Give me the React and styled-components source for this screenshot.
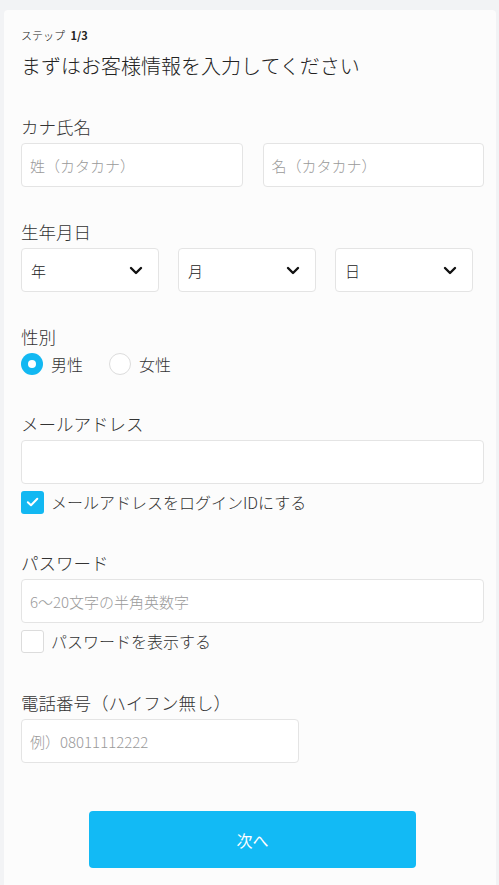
import React, { useState } from 'react';
import styled, { createGlobalStyle } from 'styled-components';

const GlobalStyle = createGlobalStyle`
  html, body {
    margin: 0;
    padding: 0;
    background: #f2f3f5;
  }
  body {
    font-family: "Noto Sans CJK JP", "Noto Sans", "Liberation Sans", sans-serif;
    font-weight: 300;
    color: #333;
  }
  * { box-sizing: border-box; }
`;

const ChevronDown = () => (
  <svg width="14" height="9" viewBox="0 0 14 9" fill="none">
    <path d="M2 2l5 5 5-5" stroke="#111" strokeWidth="2.4" strokeLinecap="round" strokeLinejoin="round" />
  </svg>
);

const CheckMark = () => (
  <svg width="13" height="10" viewBox="0 0 13 10" fill="none">
    <path d="M1.8 5.2l3.2 3 6.3-6.4" stroke="#fff" strokeWidth="2" strokeLinecap="round" strokeLinejoin="round" />
  </svg>
);

const App = () => {
  const [gender, setGender] = useState('male');
  const [mailAsId, setMailAsId] = useState(true);
  const [showPass, setShowPass] = useState(false);

  return (
    <>
      <GlobalStyle />
      <Card>
        <Step>ステップ <b>1/3</b></Step>
        <Heading>まずはお客様情報を入力してください</Heading>

        <Section $gap="35px">
          <Label>カナ氏名</Label>
          <NameGrid>
            <Input placeholder="姓（カタカナ）" />
            <Input placeholder="名（カタカナ）" />
          </NameGrid>
        </Section>

        <Section>
          <Label>生年月日</Label>
          <SelectGrid>
            {['年', '月', '日'].map(t => (
              <SelectBox key={t}>
                <span>{t}</span>
                <ChevronDown />
              </SelectBox>
            ))}
          </SelectGrid>
        </Section>

        <Section>
          <Label>性別</Label>
          <RadioRow>
            <Choice onClick={() => setGender('male')}>
              <Radio $checked={gender === 'male'} />
              男性
            </Choice>
            <Choice onClick={() => setGender('female')}>
              <Radio $checked={gender === 'female'} />
              女性
            </Choice>
          </RadioRow>
        </Section>

        <Section $gap="34px">
          <Label>メールアドレス</Label>
          <Input type="email" />
          <CheckRow onClick={() => setMailAsId(!mailAsId)}>
            <Box $checked={mailAsId}>{mailAsId && <CheckMark />}</Box>
            メールアドレスをログインIDにする
          </CheckRow>
        </Section>

        <Section $gap="35px">
          <Label>パスワード</Label>
          <Input type={showPass ? 'text' : 'password'} placeholder="6〜20文字の半角英数字" />
          <CheckRow onClick={() => setShowPass(!showPass)}>
            <Box $checked={showPass}>{showPass && <CheckMark />}</Box>
            パスワードを表示する
          </CheckRow>
        </Section>

        <Section $gap="36px">
          <Label>電話番号（ハイフン無し）</Label>
          <Input $width="278px" placeholder="例）08011112222" />
        </Section>

        <NextButton>次へ</NextButton>
      </Card>
    </>
  );
};

const Card = styled.div`
  margin: 10px 3px 0 4px;
  padding: 17px 12px 24px 17px;
  background: #fcfcfc;
  border-radius: 4px;
  min-height: 875px;
`;

const Step = styled.div`
  font-size: 11px;
  line-height: 16px;
  color: #222;
  b { font-weight: 700; margin-left: 3px; }
`;

const Heading = styled.h1`
  margin: 9px 0 0;
  font-size: 20px;
  line-height: 28px;
  font-weight: 300;
  color: #222;
`;

const Section = styled.div`
  margin-top: ${({ $gap }) => $gap || '33px'};
  display: flex;
  flex-direction: column;
  align-items: flex-start;
`;

const Label = styled.div`
  font-size: 17.5px;
  line-height: 24px;
  color: #333;
  margin-bottom: 4px;
`;

const Input = styled.input`
  width: ${({ $width }) => $width || '100%'};
  height: 44px;
  padding: 0 8px;
  border: 1px solid #e4e4e4;
  border-radius: 4px;
  background: #fff;
  font-family: inherit;
  font-weight: 300;
  font-size: 15px;
  color: #333;
  outline: none;
  &::placeholder { color: #9a9a9a; }
`;

const NameGrid = styled.div`
  width: 100%;
  display: grid;
  grid-template-columns: 1fr 1fr;
  gap: 20px;
`;

const SelectGrid = styled.div`
  display: grid;
  grid-template-columns: repeat(3, 138px);
  gap: 19px;
`;

const SelectBox = styled.div`
  height: 44px;
  padding: 0 15px 0 9px;
  display: flex;
  align-items: center;
  justify-content: space-between;
  border: 1px solid #e4e4e4;
  border-radius: 4px;
  background: #fff;
  font-size: 15px;
  color: #222;
`;

const RadioRow = styled.div`
  display: flex;
  align-items: center;
  gap: 26px;
  height: 28px;
  margin-top: -3px;
`;

const Choice = styled.label`
  display: flex;
  align-items: center;
  gap: 8px;
  font-size: 16px;
  color: #333;
  cursor: pointer;
`;

const Radio = styled.span`
  width: 22px;
  height: 22px;
  border-radius: 50%;
  background: ${({ $checked }) => ($checked ? '#12b8f2' : '#fff')};
  border: ${({ $checked }) => ($checked ? 'none' : '1px solid #dcdcdc')};
  display: flex;
  align-items: center;
  justify-content: center;
  &::after {
    content: '';
    display: ${({ $checked }) => ($checked ? 'block' : 'none')};
    width: 8px;
    height: 8px;
    border-radius: 50%;
    background: #fff;
  }
`;

const CheckRow = styled.label`
  display: flex;
  align-items: center;
  gap: 7px;
  height: 28px;
  margin-top: 4px;
  font-size: 16px;
  color: #333;
  cursor: pointer;
`;

const Box = styled.span`
  width: 23px;
  height: 23px;
  border-radius: 3px;
  background: ${({ $checked }) => ($checked ? '#12b8f2' : '#fff')};
  border: ${({ $checked }) => ($checked ? 'none' : '1px solid #dcdcdc')};
  display: flex;
  align-items: center;
  justify-content: center;
`;

const NextButton = styled.button`
  display: block;
  width: 327px;
  height: 57px;
  margin: 48px auto 0;
  border: none;
  border-radius: 4px;
  background: #12baf5;
  color: #fff;
  font-family: inherit;
  font-size: 16px;
  cursor: pointer;
`;

export default App;
